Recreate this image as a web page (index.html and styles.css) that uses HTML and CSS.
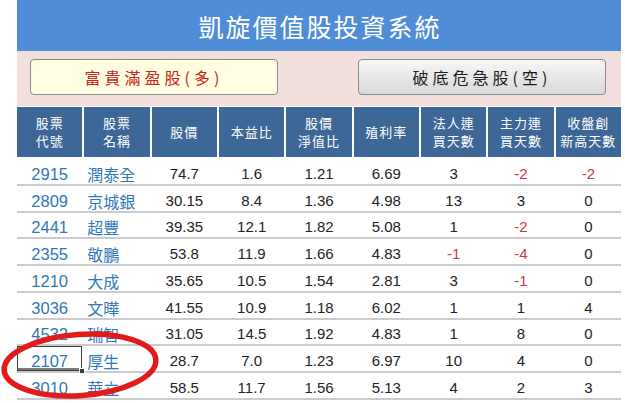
FILE: index.html
```html
<!DOCTYPE html>
<html lang="zh-Hant">
<head>
<meta charset="utf-8">
<title>凱旋價值股投資系統</title>
<link rel="stylesheet" href="styles.css">
</head>
<body>
<div class="page">
  <div class="sheet">
    <header class="title-bar">凱旋價值股投資系統</header>
    <div class="tabs">
      <button class="tab tab-long">富貴滿盈股(多)</button>
      <button class="tab tab-short">破底危急股(空)</button>
    </div>
    <div class="grid head">
      <div class="hc">股票<br>代號</div>
      <div class="hc">股票<br>名稱</div>
      <div class="hc">股價</div>
      <div class="hc">本益比</div>
      <div class="hc">股價<br>淨值比</div>
      <div class="hc">殖利率</div>
      <div class="hc">法人連<br>買天數</div>
      <div class="hc">主力連<br>買天數</div>
      <div class="hc">收盤創<br>新高天數</div>
    </div>
    <div class="rows">
      <div class="grid row"><div class="c code">2915</div><div class="c name">潤泰全</div><div class="c">74.7</div><div class="c">1.6</div><div class="c">1.21</div><div class="c">6.69</div><div class="c">3</div><div class="c neg">-2</div><div class="c neg">-2</div></div>
      <div class="grid row"><div class="c code">2809</div><div class="c name">京城銀</div><div class="c">30.15</div><div class="c">8.4</div><div class="c">1.36</div><div class="c">4.98</div><div class="c">13</div><div class="c">3</div><div class="c">0</div></div>
      <div class="grid row"><div class="c code">2441</div><div class="c name">超豐</div><div class="c">39.35</div><div class="c">12.1</div><div class="c">1.82</div><div class="c">5.08</div><div class="c">1</div><div class="c neg">-2</div><div class="c">0</div></div>
      <div class="grid row"><div class="c code">2355</div><div class="c name">敬鵬</div><div class="c">53.8</div><div class="c">11.9</div><div class="c">1.66</div><div class="c">4.83</div><div class="c neg">-1</div><div class="c neg">-4</div><div class="c">0</div></div>
      <div class="grid row"><div class="c code">1210</div><div class="c name">大成</div><div class="c">35.65</div><div class="c">10.5</div><div class="c">1.54</div><div class="c">2.81</div><div class="c">3</div><div class="c neg">-1</div><div class="c">0</div></div>
      <div class="grid row"><div class="c code">3036</div><div class="c name">文曄</div><div class="c">41.55</div><div class="c">10.9</div><div class="c">1.18</div><div class="c">6.02</div><div class="c">1</div><div class="c">1</div><div class="c">4</div></div>
      <div class="grid row"><div class="c code">4532</div><div class="c name">瑞智</div><div class="c">31.05</div><div class="c">14.5</div><div class="c">1.92</div><div class="c">4.83</div><div class="c">1</div><div class="c">8</div><div class="c">0</div></div>
      <div class="grid row"><div class="c code selected">2107</div><div class="c name">厚生</div><div class="c">28.7</div><div class="c">7.0</div><div class="c">1.23</div><div class="c">6.97</div><div class="c">10</div><div class="c">4</div><div class="c">0</div></div>
      <div class="grid row"><div class="c code">3010</div><div class="c name">華立</div><div class="c">58.5</div><div class="c">11.7</div><div class="c">1.56</div><div class="c">5.13</div><div class="c">4</div><div class="c">2</div><div class="c">3</div></div>
    </div>
  </div>
  <svg class="ring" width="170" height="80" viewBox="0 0 170 80" aria-hidden="true">
    <ellipse cx="80" cy="38" rx="76" ry="30.5" transform="rotate(-4 80 38)" fill="none" stroke="#e11b1b" stroke-width="5.5"/>
  </svg>
</div>
</body>
</html>
```

FILE: styles.css
```css
html, body {
  margin: 0;
  padding: 0;
  background: #ffffff;
}

body {
  font-family: "Liberation Sans", "Noto Sans CJK TC", sans-serif;
  color: #222;
}

.page {
  position: relative;
  width: 625px;
  height: 403px;
  overflow: hidden;
}

.sheet {
  margin-left: 17px;
  width: 604px;
}

.title-bar {
  height: 51px;
  background: #4f8dd6;
  color: #ffffff;
  font-family: "Noto Sans CJK TC", sans-serif;
  font-size: 25px;
  letter-spacing: 2px;
  display: flex;
  align-items: center;
  justify-content: center;
  padding-left: 2px;
}

.tabs {
  height: 55px;
  background: #f2dedd;
  display: flex;
  justify-content: space-between;
  align-items: flex-start;
  padding: 8px 15px 0 13px;
  box-sizing: border-box;
}

.tab {
  width: 248px;
  height: 36px;
  border: 1px solid #8c8c8c;
  border-radius: 4px;
  font-family: "Noto Sans CJK TC", sans-serif;
  font-size: 16px;
  letter-spacing: 4px;
  padding: 0;
  box-sizing: border-box;
  cursor: pointer;
}

.tab-long {
  background: #fffde2;
  color: #c9261c;
}

.tab-short {
  background: linear-gradient(#f7f7f7, #d9d9d9);
  color: #1d1d1d;
}

.grid {
  display: grid;
  grid-template-columns: repeat(9, 1fr);
  column-gap: 2px;
}

.head {
  margin-top: 1px;
  height: 50px;
}

.hc {
  background: #3c6797;
  color: #ffffff;
  font-family: "Noto Sans CJK TC", sans-serif;
  font-size: 13px;
  line-height: 18px;
  letter-spacing: 1px;
  display: flex;
  align-items: center;
  justify-content: center;
  text-align: center;
}

.rows {
  padding-top: 2px;
}

.row {
  height: 26.75px;
  box-sizing: border-box;
  border-bottom: 2px solid #cbcbcb;
}

.c {
  display: flex;
  align-items: flex-end;
  justify-content: center;
  font-size: 15px;
  line-height: 16px;
  padding-bottom: 2px;
  color: #232323;
}

.code {
  font-size: 16.5px;
  color: #2f78b7;
}

.name {
  justify-content: flex-start;
  padding-left: 3px;
  font-family: "Noto Sans CJK TC", sans-serif;
  font-size: 16px;
  color: #2f78b7;
}

.neg {
  color: #d0363a;
}

.selected {
  position: relative;
  box-shadow: inset 0 0 0 1px #3f3f3f, inset 0 -3px 0 #7a7a7a;
}

.selected::after {
  content: "";
  position: absolute;
  right: -3px;
  bottom: -3px;
  width: 4px;
  height: 4px;
  background: #3a3a3a;
  border: 1px solid #ffffff;
}

.ring {
  position: absolute;
  left: 0;
  top: 327px;
}
```
